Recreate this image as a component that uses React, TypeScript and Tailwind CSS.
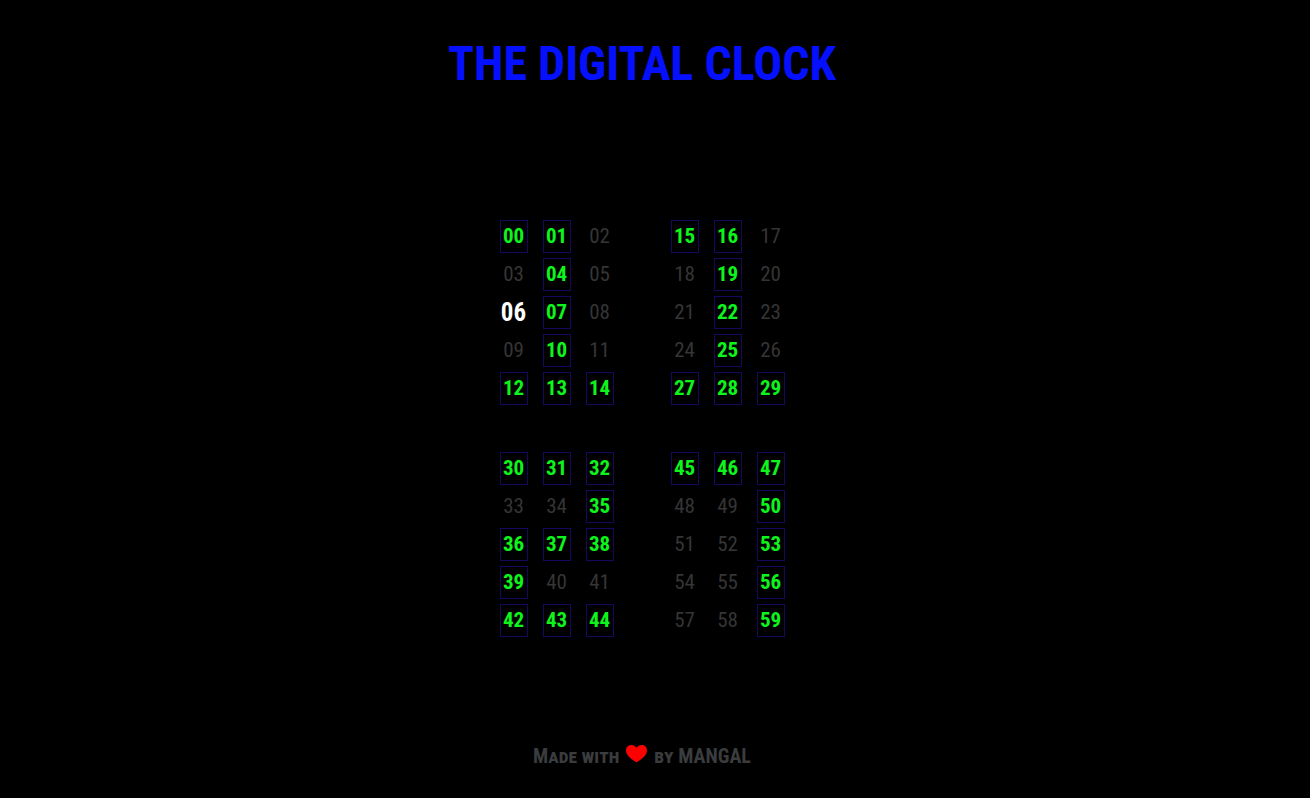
const HOURS: number[][] = [
  [0, 1, 4, 7, 10, 12, 13, 14],
  [15, 16, 19, 22, 25, 27, 28, 29],
];
const MINUTES: number[][] = [
  [30, 31, 32, 35, 36, 37, 38, 39, 42, 43, 44],
  [45, 46, 47, 50, 53, 56, 59],
];
const CURRENT_SECOND = 6;

function Cell({ value, lit }: { value: number; lit: boolean }) {
  const state =
    value === CURRENT_SECOND
      ? "border-transparent text-[25px] font-bold text-white"
      : lit
        ? "border-[#14085f] text-[21px] font-bold text-[#0df51c]"
        : "border-transparent text-[21px] text-[#353535]";
  return (
    <span className={`flex h-[33px] w-7 items-center justify-center border leading-none ${state}`}>
      {String(value).padStart(2, "0")}
    </span>
  );
}

function Digit({ start, lit }: { start: number; lit: number[] }) {
  return (
    <div className="grid grid-cols-3 gap-x-[15px] gap-y-[5px]">
      {Array.from({ length: 15 }, (_, i) => (
        <Cell key={i} value={start + i} lit={lit.includes(start + i)} />
      ))}
    </div>
  );
}

function Pair({ start, digits }: { start: number; digits: number[][] }) {
  return (
    <div className="flex gap-[57px]">
      {digits.map((lit, i) => (
        <Digit key={i} start={start + i * 15} lit={lit} />
      ))}
    </div>
  );
}

export default function App() {
  return (
    <div className="flex min-h-screen flex-col items-center bg-black pr-[26px] font-['Roboto_Condensed','Roboto',sans-serif]">
      <h1 className="pt-9 text-[48px] leading-[56px] font-bold whitespace-nowrap text-[#0510ff]">
        THE DIGITAL CLOCK
      </h1>
      <main className="flex flex-col gap-[47px] pt-32">
        <Pair start={0} digits={HOURS} />
        <Pair start={30} digits={MINUTES} />
      </main>
      <footer className="mt-auto flex items-center gap-[7px] pb-7 text-[20px] leading-7 font-bold whitespace-nowrap text-[#3a3c3d] [font-variant-caps:small-caps]">
        <span>Made with</span>
        <svg className="-mt-1 h-[18px] w-[21px]" viewBox="0 0 21 18" fill="#ff0000" role="img" aria-label="love">
          <path d="M10.5 17.5C7.5 15.2 0 11.2 0 5.5C0 2.2 2.4 0 5.3 0C7.6 0 9.4 1.1 10.5 2.8C11.6 1.1 13.4 0 15.7 0C18.6 0 21 2.2 21 5.5C21 11.2 13.5 15.2 10.5 17.5Z" />
        </svg>
        <span>by MANGAL</span>
      </footer>
    </div>
  );
}
